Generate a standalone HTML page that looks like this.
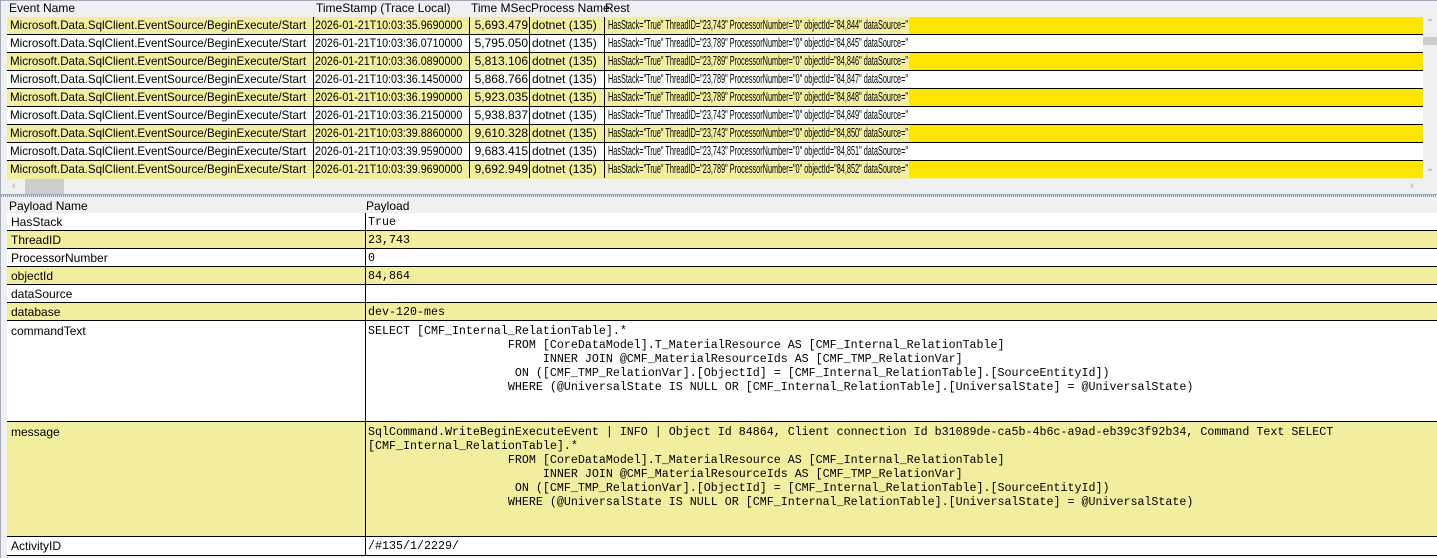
<!DOCTYPE html>
<html><head><meta charset="utf-8"><style>
*{margin:0;padding:0;box-sizing:border-box}
body{width:1437px;height:558px;overflow:hidden;background:#f0f0f0;font-family:"Liberation Sans",sans-serif;font-size:12px;color:#000;position:relative}
.a{position:absolute;white-space:nowrap}
.hdr{position:absolute;top:0;height:17px;line-height:17px;font-size:12px;white-space:nowrap}
.row{position:absolute;left:7px;width:1416px;height:18px;border-bottom:1px solid #000}
.y{background:#f2eea0}
.w{background:#fff}
.c{position:absolute;top:0;height:17px;line-height:17px;white-space:nowrap;overflow:hidden;border-right:1px solid #000}
.c span{display:inline-block;transform-origin:0 50%}
.e span{transform:scaleX(0.965)}
.t span{transform:scaleX(0.89)}
.r{text-align:right;padding-right:1px}
.rest{position:absolute;top:0;left:598px;height:17px;line-height:17px;white-space:nowrap;padding-left:3px;font-size:12.5px}
.rest span{display:inline-block;transform:scaleX(0.585);transform-origin:0 50%}
.hl{position:absolute;left:902px;top:0;width:514px;height:17px;background:#ffe600}
.prow{position:absolute;left:7px;width:1430px;border-bottom:1px solid #000}
.pn{position:absolute;left:4px;top:1px;line-height:17px}
.pv{position:absolute;left:358px;top:0;bottom:0;border-left:1px solid #000;padding-left:2px;font-family:"Liberation Mono",monospace;font-size:11.67px;line-height:14px;white-space:pre;padding-top:2px}
</style></head><body>
<div class="a" style="left:0;top:0;width:1437px;height:1px;background:#a0aab8"></div>
<div class="a" style="left:0;top:0;width:1px;height:558px;background:#a0aab8"></div>
<div class="hdr" style="left:9px">Event Name</div>
<div class="hdr" style="left:316px">TimeStamp (Trace Local)</div>
<div class="hdr" style="left:471px">Time MSec</div>
<div class="hdr" style="left:531px">Process Name</div>
<div class="hdr" style="left:605px">Rest</div>

<div class="row y" style="top:17px"><div class="c e" style="left:0;width:307px;padding-left:3px"><span>Microsoft.Data.SqlClient.EventSource/BeginExecute/Start</span></div><div class="c t" style="left:307px;width:156px;padding-left:1px"><span>2026-01-21T10:03:35.9690000</span></div><div class="c r" style="left:463px;width:60px">5,693.479</div><div class="c" style="left:523px;width:75px;padding-left:2px">dotnet (135)</div><div class="hl"></div><div class="rest"><span>HasStack="True" ThreadID="23,743" ProcessorNumber="0" objectId="84,844" dataSource="</span></div></div>
<div class="row w" style="top:35px"><div class="c e" style="left:0;width:307px;padding-left:3px"><span>Microsoft.Data.SqlClient.EventSource/BeginExecute/Start</span></div><div class="c t" style="left:307px;width:156px;padding-left:1px"><span>2026-01-21T10:03:36.0710000</span></div><div class="c r" style="left:463px;width:60px">5,795.050</div><div class="c" style="left:523px;width:75px;padding-left:2px">dotnet (135)</div><div class="rest"><span>HasStack="True" ThreadID="23,789" ProcessorNumber="0" objectId="84,845" dataSource="</span></div></div>
<div class="row y" style="top:53px"><div class="c e" style="left:0;width:307px;padding-left:3px"><span>Microsoft.Data.SqlClient.EventSource/BeginExecute/Start</span></div><div class="c t" style="left:307px;width:156px;padding-left:1px"><span>2026-01-21T10:03:36.0890000</span></div><div class="c r" style="left:463px;width:60px">5,813.106</div><div class="c" style="left:523px;width:75px;padding-left:2px">dotnet (135)</div><div class="hl"></div><div class="rest"><span>HasStack="True" ThreadID="23,789" ProcessorNumber="0" objectId="84,846" dataSource="</span></div></div>
<div class="row w" style="top:71px"><div class="c e" style="left:0;width:307px;padding-left:3px"><span>Microsoft.Data.SqlClient.EventSource/BeginExecute/Start</span></div><div class="c t" style="left:307px;width:156px;padding-left:1px"><span>2026-01-21T10:03:36.1450000</span></div><div class="c r" style="left:463px;width:60px">5,868.766</div><div class="c" style="left:523px;width:75px;padding-left:2px">dotnet (135)</div><div class="rest"><span>HasStack="True" ThreadID="23,789" ProcessorNumber="0" objectId="84,847" dataSource="</span></div></div>
<div class="row y" style="top:89px"><div class="c e" style="left:0;width:307px;padding-left:3px"><span>Microsoft.Data.SqlClient.EventSource/BeginExecute/Start</span></div><div class="c t" style="left:307px;width:156px;padding-left:1px"><span>2026-01-21T10:03:36.1990000</span></div><div class="c r" style="left:463px;width:60px">5,923.035</div><div class="c" style="left:523px;width:75px;padding-left:2px">dotnet (135)</div><div class="hl"></div><div class="rest"><span>HasStack="True" ThreadID="23,789" ProcessorNumber="0" objectId="84,848" dataSource="</span></div></div>
<div class="row w" style="top:107px"><div class="c e" style="left:0;width:307px;padding-left:3px"><span>Microsoft.Data.SqlClient.EventSource/BeginExecute/Start</span></div><div class="c t" style="left:307px;width:156px;padding-left:1px"><span>2026-01-21T10:03:36.2150000</span></div><div class="c r" style="left:463px;width:60px">5,938.837</div><div class="c" style="left:523px;width:75px;padding-left:2px">dotnet (135)</div><div class="rest"><span>HasStack="True" ThreadID="23,743" ProcessorNumber="0" objectId="84,849" dataSource="</span></div></div>
<div class="row y" style="top:125px"><div class="c e" style="left:0;width:307px;padding-left:3px"><span>Microsoft.Data.SqlClient.EventSource/BeginExecute/Start</span></div><div class="c t" style="left:307px;width:156px;padding-left:1px"><span>2026-01-21T10:03:39.8860000</span></div><div class="c r" style="left:463px;width:60px">9,610.328</div><div class="c" style="left:523px;width:75px;padding-left:2px">dotnet (135)</div><div class="hl"></div><div class="rest"><span>HasStack="True" ThreadID="23,743" ProcessorNumber="0" objectId="84,850" dataSource="</span></div></div>
<div class="row w" style="top:143px"><div class="c e" style="left:0;width:307px;padding-left:3px"><span>Microsoft.Data.SqlClient.EventSource/BeginExecute/Start</span></div><div class="c t" style="left:307px;width:156px;padding-left:1px"><span>2026-01-21T10:03:39.9590000</span></div><div class="c r" style="left:463px;width:60px">9,683.415</div><div class="c" style="left:523px;width:75px;padding-left:2px">dotnet (135)</div><div class="rest"><span>HasStack="True" ThreadID="23,743" ProcessorNumber="0" objectId="84,851" dataSource="</span></div></div>
<div class="row y" style="top:161px;border-bottom:none"><div class="c e" style="left:0;width:307px;padding-left:3px"><span>Microsoft.Data.SqlClient.EventSource/BeginExecute/Start</span></div><div class="c t" style="left:307px;width:156px;padding-left:1px"><span>2026-01-21T10:03:39.9690000</span></div><div class="c r" style="left:463px;width:60px">9,692.949</div><div class="c" style="left:523px;width:75px;padding-left:2px">dotnet (135)</div><div class="hl"></div><div class="rest"><span>HasStack="True" ThreadID="23,789" ProcessorNumber="0" objectId="84,852" dataSource="</span></div></div>

<!-- vertical scrollbar -->
<div class="a" style="left:1423px;top:17px;width:14px;height:162px;background:#f0f0f0"></div>
<div class="a" style="left:1426px;top:18px;color:#a0a0a0;font-size:10px">&#8963;</div>
<div class="a" style="left:1423px;top:37px;width:14px;height:8px;background:#cdcdcd"></div>
<div class="a" style="left:1426px;top:163px;color:#a0a0a0;font-size:10px">&#8964;</div>
<!-- horizontal scrollbar -->
<div class="a" style="left:1px;top:179px;width:1436px;height:15px;background:#f0f0f0"></div>
<div class="a" style="left:12px;top:180px;color:#a0a0a0;font-size:11px">&lsaquo;</div>
<div class="a" style="left:25px;top:179px;width:39px;height:15px;background:#cdcdcd"></div>
<div class="a" style="left:1410px;top:180px;color:#a0a0a0;font-size:11px">&rsaquo;</div>
<!-- splitter -->
<div class="a" style="left:1px;top:194px;width:1436px;height:3px;background:repeating-linear-gradient(90deg,#8a9cb4 0 1px,#dfe4ec 1px 2px);border-top:1px solid #9aaac0"></div>

<!-- payload -->
<div class="hdr" style="left:9px;top:198px;line-height:16px">Payload Name</div>
<div class="hdr" style="left:366px;top:198px;line-height:16px">Payload</div>

<div class="prow w" style="top:213px;height:18px"><div class="pn">HasStack</div><div class="pv">True</div></div>
<div class="prow y" style="top:231px;height:18px"><div class="pn">ThreadID</div><div class="pv">23,743</div></div>
<div class="prow w" style="top:249px;height:18px"><div class="pn">ProcessorNumber</div><div class="pv">0</div></div>
<div class="prow y" style="top:267px;height:18px"><div class="pn">objectId</div><div class="pv">84,864</div></div>
<div class="prow w" style="top:285px;height:18px"><div class="pn">dataSource</div><div class="pv"></div></div>
<div class="prow y" style="top:303px;height:18px"><div class="pn">database</div><div class="pv">dev-120-mes</div></div>
<div class="prow w" style="top:321px;height:101px"><div class="pn" style="top:2px">commandText</div><div class="pv" style="padding-top:3px">SELECT [CMF_Internal_RelationTable].*
                    FROM [CoreDataModel].T_MaterialResource AS [CMF_Internal_RelationTable]
                         INNER JOIN @CMF_MaterialResourceIds AS [CMF_TMP_RelationVar]
                     ON ([CMF_TMP_RelationVar].[ObjectId] = [CMF_Internal_RelationTable].[SourceEntityId])
                    WHERE (@UniversalState IS NULL OR [CMF_Internal_RelationTable].[UniversalState] = @UniversalState)</div></div>
<div class="prow y" style="top:422px;height:115px"><div class="pn" style="top:2px">message</div><div class="pv" style="padding-top:3px">SqlCommand.WriteBeginExecuteEvent | INFO | Object Id 84864, Client connection Id b31089de-ca5b-4b6c-a9ad-eb39c3f92b34, Command Text SELECT
[CMF_Internal_RelationTable].*
                    FROM [CoreDataModel].T_MaterialResource AS [CMF_Internal_RelationTable]
                         INNER JOIN @CMF_MaterialResourceIds AS [CMF_TMP_RelationVar]
                     ON ([CMF_TMP_RelationVar].[ObjectId] = [CMF_Internal_RelationTable].[SourceEntityId])
                    WHERE (@UniversalState IS NULL OR [CMF_Internal_RelationTable].[UniversalState] = @UniversalState)</div></div>
<div class="prow w" style="top:537px;height:19px"><div class="pn">ActivityID</div><div class="pv">/#135/1/2229/</div></div>
</body></html>
